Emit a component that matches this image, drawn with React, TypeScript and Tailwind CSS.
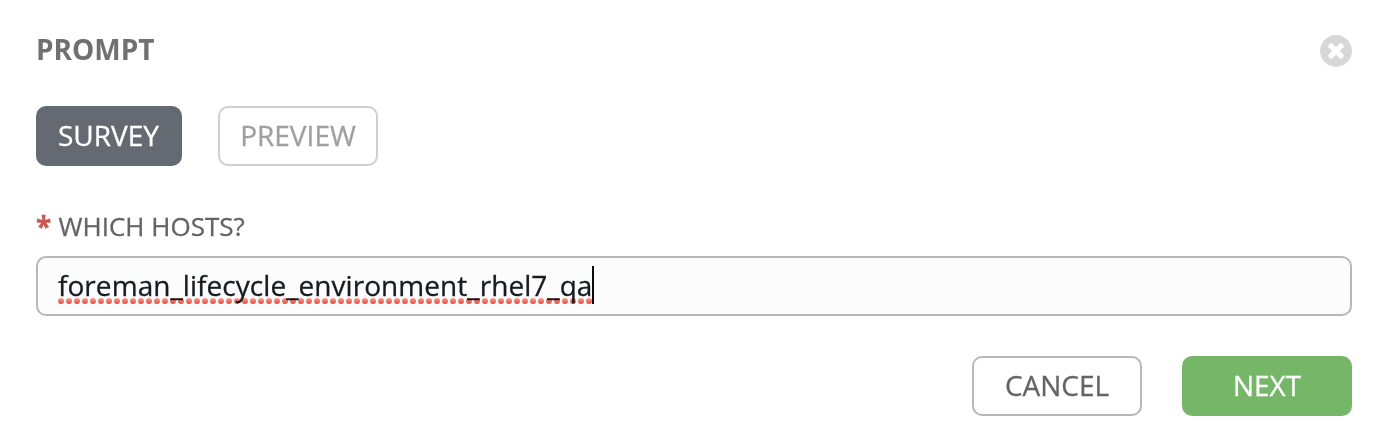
export default function App() {
  return (
    <main className="h-[448px] w-[1388px] bg-white px-9 pt-[29px] font-['Open_Sans','Noto_Sans',sans-serif] text-[28px] leading-10 antialiased">
      <header className="flex h-10 items-center justify-between">
        <h1 className="font-bold text-[#707070]">PROMPT</h1>
        <button aria-label="Close" className="mt-[3px] text-[#d7d7d7]">
          <svg viewBox="0 128 1536 1536" className="size-8" fill="currentColor">
            <path d="M1149 1122q0-26-19-45L949 896l181-181q19-19 19-45 0-27-19-46l-90-90q-19-19-46-19-26 0-45 19L768 715 587 534q-19-19-45-19-27 0-46 19l-90 90q-19 19-19 46 0 26 19 45l181 181-181 181q-19 19-19 45 0 27 19 46l90 90q19 19 46 19 26 0 45-19l181-181 181 181q19 19 45 19 27 0 46-19l90-90q19-19 19-46zm387-226q0 209-103 385.5T1153.5 1561 768 1664t-385.5-103T103 1281.5 0 896t103-385.5T382.5 231 768 128t385.5 103T1433 510.5 1536 896z" />
          </svg>
        </button>
      </header>
      <nav className="mt-[37px] flex gap-9">
        <button className="h-[60px] w-[146px] rounded-[10px] bg-[#646972] pr-px pb-[2px] text-white [-webkit-text-stroke:0.3px]">SURVEY</button>
        <button className="h-[60px] w-40 rounded-[10px] border-2 border-[#d0d0d0] pb-[2px] text-[#a0a0a0] [-webkit-text-stroke:0.3px]">PREVIEW</button>
      </nav>
      <div className="mt-10 flex h-10 items-center text-[26px] text-[#646464]">
        <span className="w-[22.5px] pb-px text-[28px] font-bold text-[#c9574d] [-webkit-text-stroke:0.3px]">*</span>
        <span className="[-webkit-text-stroke:0.3px]">WHICH HOSTS?</span>
      </div>
      <div className="mt-[10px] flex h-[60px] items-center rounded-[10px] border-2 border-[#b7b7b7] bg-[#fcfcfc] px-5 pb-[2px] text-[#161b1f]">
        <span className="relative w-[534px] whitespace-nowrap tracking-[0.055px] [-webkit-text-stroke:0.3px]">
          foreman_lifecycle_environment_rhel7_qa
          <svg className="absolute bottom-[1px] left-0 h-[6px] w-full mix-blend-multiply">
            <defs>
              <linearGradient id="dot" x1="0" y1="0" x2="0" y2="1">
                <stop stopColor="#f9a49b" />
                <stop offset="1" stopColor="#e9483a" />
              </linearGradient>
              <pattern id="dots" width="8" height="6" patternUnits="userSpaceOnUse">
                <circle cx="3" cy="3" r="3" fill="url(#dot)" />
              </pattern>
            </defs>
            <rect width="100%" height="6" fill="url(#dots)" />
          </svg>
        </span>
        <span className="h-[38px] w-0.5 bg-[#080c10]" />
      </div>
      <footer className="mt-10 flex justify-end gap-10">
        <button className="h-[60px] w-[170px] rounded-[10px] border-2 border-[#b7b7b7] pb-[2px] text-[#646464] [-webkit-text-stroke:0.3px]">CANCEL</button>
        <button className="h-[60px] w-[170px] rounded-[10px] bg-[#75b669] pb-[2px] text-white [-webkit-text-stroke:0.3px]">NEXT</button>
      </footer>
    </main>
  );
}
